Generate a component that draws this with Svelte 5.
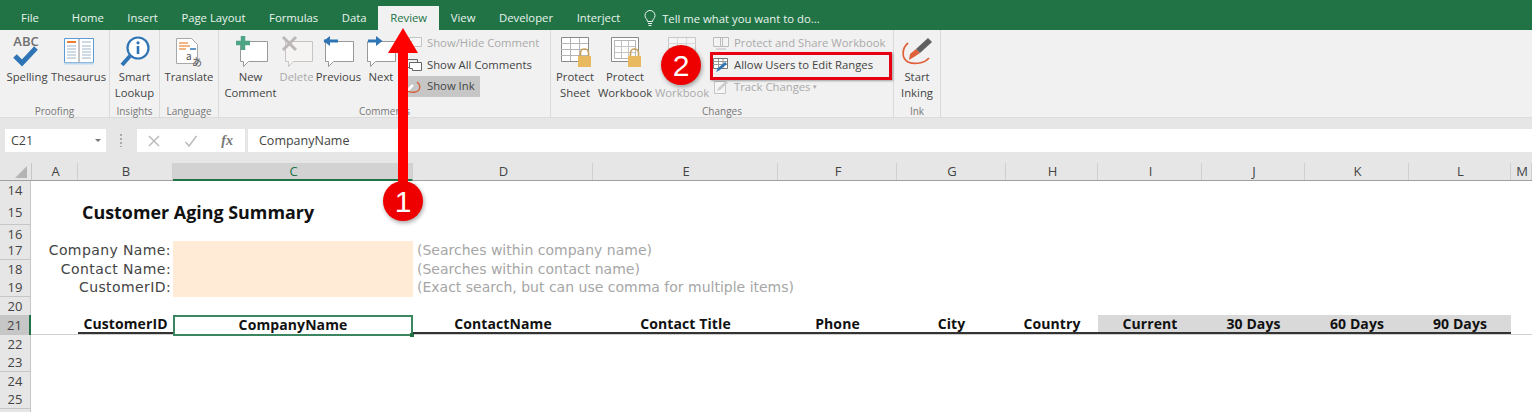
<script>
  const tabs = ['Home', 'Insert', 'Page Layout', 'Formulas', 'Data', 'Review', 'View', 'Developer', 'Interject'];
  const columns = [
    { l: 'A', w: 46 }, { l: 'B', w: 95 }, { l: 'C', w: 240, on: true }, { l: 'D', w: 180 }, { l: 'E', w: 185 },
    { l: 'F', w: 119 }, { l: 'G', w: 109 }, { l: 'H', w: 92 }, { l: 'I', w: 104 }, { l: 'J', w: 103 },
    { l: 'K', w: 104 }, { l: 'L', w: 102 }, { l: 'M', w: 21 }
  ];
  const rows = [
    { n: 14, h: 18 }, { n: 15, h: 26 }, { n: 16, h: 16 }, { n: 17, h: 19 }, { n: 18, h: 18 }, { n: 19, h: 19 },
    { n: 20, h: 18 }, { n: 21, h: 20 }, { n: 22, h: 18 }, { n: 23, h: 19 }, { n: 24, h: 18 }, { n: 25, h: 19 }, { n: '', h: 18 }
  ];
  const filters = [
    { n: 17, label: 'Company Name:', hint: '(Searches within company name)' },
    { n: 18, label: 'Contact Name:', hint: '(Searches within contact name)' },
    { n: 19, label: 'CustomerID:', hint: '(Exact search, but can use comma for multiple items)' }
  ];
  const heads = ['CustomerID', 'CompanyName', 'ContactName', 'Contact Title', 'Phone', 'City', 'Country', 'Current', '30 Days', '60 Days', '90 Days'];
</script>

<div class="app">
  <div class="tabbar">
    <div class="file">File</div>
    {#each tabs as tab}
      <div class="tab" class:active={tab === 'Review'}>{tab}</div>
    {/each}
    <div class="tell">
      <svg width="12" height="17" viewBox="0 0 12 17" fill="none" stroke="#e8f3ec" stroke-width="1"><path d="M3.500 11.500C3.500 9 1 8.500 1 5.500a5 5 0 0 1 10 0c0 3-2.500 3.500-2.500 6zM4 13.500h4M4.500 15.500h3" /></svg>
      <span>Tell me what you want to do...</span>
    </div>
  </div>

  <div class="ribbon">
    <section class="group" style="width:110px">
      <div class="tools">
        <div class="big" style="width:48px;margin-left:3px">
          <svg class="ico" width="32" height="34" viewBox="0 0 32 34">
            <text x="15" y="11" text-anchor="middle" class="abc">ABC</text>
            <path d="M4 21l7 7L25 13" fill="none" stroke="#2f75b5" stroke-width="5" />
          </svg>
          <span>Spelling</span>
        </div>
        <div class="big" style="width:55px">
          <svg class="ico" width="32" height="34" viewBox="0 0 32 34">
            <path d="M1.500 3.500h29v24h-29z" fill="#fff" stroke="#5b9bd5" />
            <path d="M16 3.500v24" stroke="#8a8a8a" />
            <path d="M1.500 27.500h29v2h-29z" fill="#bcd6ee" />
            <path d="M4 7h9" stroke="#ed7d31" stroke-width="2" />
            <path d="M4 11h9M4 14h9M4 17h9M4 20h9M4 23h9M19 7h9M19 11h9M19 14h9M19 17h9M19 20h9M19 23h9" stroke="#9db4c9" />
          </svg>
          <span>Thesaurus</span>
        </div>
      </div>
      <div class="glabel">Proofing</div>
    </section>

    <section class="group" style="width:50px">
      <div class="tools">
        <div class="big" style="width:49px">
          <svg class="ico" width="32" height="34" viewBox="0 0 32 34">
            <circle cx="19" cy="13" r="10.500" fill="#fff" stroke="#2f75b5" stroke-width="2.200" />
            <path d="M11 21L3 30" stroke="#2f75b5" stroke-width="4" />
            <circle cx="19" cy="7.800" r="1.600" fill="#2f75b5" />
            <path d="M19 11v8" stroke="#2f75b5" stroke-width="2.600" />
          </svg>
          <span>Smart<br />Lookup</span>
        </div>
      </div>
      <div class="glabel">Insights</div>
    </section>

    <section class="group" style="width:59px">
      <div class="tools">
        <div class="big" style="width:58px">
          <svg class="ico" width="32" height="34" viewBox="0 0 32 34">
            <path d="M3.500 3.500h15l6 6v19h-21z" fill="#fff" stroke="#a8a8a8" />
            <path d="M6 8h9M6 11h11M6 14h7" stroke="#f0a060" stroke-width="1.500" />
            <text x="13" y="25" class="tr">a</text>
            <text x="19" y="31" class="tr">あ</text>
            <path d="M17 14h6" stroke="#2f75b5" stroke-width="1.500" />
          </svg>
          <span>Translate</span>
        </div>
      </div>
      <div class="glabel">Language</div>
    </section>

    <section class="group" style="width:332px">
      <div class="tools">
        <div class="big" style="width:57px;margin-left:3px">
          <svg class="ico" width="34" height="34" viewBox="0 0 34 34">
            <path d="M6.500 6.500h27v20h-19l-5 5v-5h-3z" fill="#fff" stroke="#999" stroke-linejoin="round" />
            <path d="M9 1v14M2 8h14" stroke="#4ea585" stroke-width="4.500" />
          </svg>
          <span>New<br />Comment</span>
        </div>
        <div class="big off" style="width:35px">
          <svg class="ico" width="34" height="34" viewBox="0 0 34 34">
            <path d="M5.500 6.500h27v20h-19l-5 5v-5h-3z" fill="#f6f3f3" stroke="#c9c4c4" stroke-linejoin="round" />
            <path d="M3 2l13 13M16 2L3 15" stroke="#bdb8b8" stroke-width="3" />
          </svg>
          <span>Delete</span>
        </div>
        <div class="big" style="width:49px">
          <svg class="ico" width="34" height="34" viewBox="0 0 34 34">
            <path d="M3.500 6.500h28v20h-20l-5 5v-5h-3z" fill="#fff" stroke="#999" stroke-linejoin="round" />
            <path d="M2 6h14" stroke="#2f75b5" stroke-width="3" /><path d="M8 1L1.500 6 8 11z" fill="#2f75b5" />
          </svg>
          <span>Previous</span>
        </div>
        <div class="big" style="width:36px">
          <svg class="ico" width="34" height="34" viewBox="0 0 34 34">
            <path d="M3.500 6.500h28v20h-20l-5 5v-5h-3z" fill="#fff" stroke="#999" stroke-linejoin="round" />
            <path d="M4 6h10" stroke="#2f75b5" stroke-width="3" /><path d="M12 1l6.500 5L12 11z" fill="#2f75b5" />
          </svg>
          <span>Next</span>
        </div>
        <div class="smalls" style="margin-left:6px">
          <div class="small off">
            <svg width="18" height="18" viewBox="0 0 18 18"><path d="M4.500 3.500h12v9h-8l-3 3v-3h-1z" fill="#f6f6f6" stroke="#c4c4c4" /><path d="M1.500 6.500l3 3 3-3" fill="none" stroke="#c4c4c4" /></svg>
            <span>Show/Hide Comment</span>
          </div>
          <div class="small">
            <svg width="18" height="18" viewBox="0 0 18 18"><path d="M1.500 3.500h11v8h-11z" fill="#f1f1f1" stroke="#666" /><path d="M4.500 6.500h12v8h-9v-2h-3z" fill="#fff" stroke="#666" /></svg>
            <span>Show All Comments</span>
          </div>
          <div class="small pressed">
            <svg width="18" height="18" viewBox="0 0 18 18"><path d="M1.500 13.500L8 7" stroke="#fff" stroke-width="2.500" /><path d="M12 4c4 3 4 9-2 10-3 .5-6 0-8-1" fill="none" stroke="#d9603a" stroke-width="1.300" /></svg>
            <span>Show Ink</span>
          </div>
        </div>
      </div>
      <div class="glabel">Comments</div>
    </section>

    <section class="group" style="width:343px">
      <div class="tools">
        <div class="big" style="width:46px;margin-left:1px">
          <svg class="ico" width="34" height="34" viewBox="0 0 34 34">
            <path d="M3.500 2.500h27v24h-27z" fill="#fff" stroke="#8a8a8a" />
            <path d="M3 8.500h27M3 14.500h27M3 20.500h27M12.500 3v23M21.500 3v23" stroke="#b5b5b5" />
            <path d="M22.500 21v-3a4 4 0 0 1 8 0v3" fill="none" stroke="#c9a15a" stroke-width="1.600" />
            <path d="M20 21h13v11H20z" fill="#e8b95e" />
          </svg>
          <span>Protect<br />Sheet</span>
        </div>
        <div class="big" style="width:54px">
          <svg class="ico" width="34" height="34" viewBox="0 0 34 34">
            <path d="M3.500 2.500h27v24h-27z" fill="#fff" stroke="#8a8a8a" />
            <path d="M6.500 5.500h21v18h-21z" fill="#fff" stroke="#b5b5b5" />
            <path d="M6 11.500h21M6 17.500h21M13.500 6v17M20.500 6v17" stroke="#c4c4c4" />
            <path d="M22.500 21v-3a4 4 0 0 1 8 0v3" fill="none" stroke="#c9a15a" stroke-width="1.600" />
            <path d="M20 21h13v11H20z" fill="#e8b95e" />
          </svg>
          <span>Protect<br />Workbook</span>
        </div>
        <div class="big off" style="width:60px">
          <svg class="ico" width="34" height="34" viewBox="0 0 34 34">
            <path d="M3.500 2.500h27v24h-27z" fill="#f5f5f5" stroke="#c8c8c8" />
            <path d="M3 8.500h27M3 14.500h27M12.500 3v23M21.500 3v23" stroke="#d8d8d8" />
          </svg>
          <span>&nbsp;<br />Workbook</span>
        </div>
        <div class="smalls">
          <div class="small off">
            <svg width="18" height="18" viewBox="0 0 18 18"><path d="M1.500 3.500h9v9h-9zM8.500 3.500h8v9h-8z" fill="#f4f4f4" stroke="#bcbcbc" /><path d="M4 15h10" stroke="#bcbcbc" /></svg>
            <span>Protect and Share Workbook</span>
          </div>
          <div class="small">
            <svg width="18" height="18" viewBox="0 0 18 18"><path d="M1.500 2.500h14v10h-14z" fill="#fff" stroke="#777" /><path d="M1 5.500h14M1 8.500h14M6.500 3v9M11 3v9" stroke="#9a9a9a" /><path d="M4 16l2-4 7-6 2 2-7 6z" fill="#2f75b5" /></svg>
            <span>Allow Users to Edit Ranges</span>
          </div>
          <div class="small off">
            <svg width="18" height="18" viewBox="0 0 18 18"><path d="M2.500 3.500h11v12h-11z" fill="#f6f6f6" stroke="#c4c4c4" /><path d="M5 13l1-3 8-7 2 2-8 7z" fill="#cfcfcf" /></svg>
            <span>Track Changes <i>▾</i></span>
          </div>
        </div>
      </div>
      <div class="glabel">Changes</div>
    </section>

    <section class="group" style="width:47px">
      <div class="tools">
        <div class="big" style="width:46px">
          <svg class="ico" width="34" height="34" viewBox="0 0 34 34">
            <path d="M8 8C2 13 1 23 8 27c7 3 17 1 21-4" fill="none" stroke="#e0603a" stroke-width="1.700" />
            <path d="M14 22l-5 3 1-6 6-5 4 4z" fill="#e0603a" />
            <path d="M16 14L28 3l4 4-12 11z" fill="#5f5f5f" />
          </svg>
          <span>Start<br />Inking</span>
        </div>
      </div>
      <div class="glabel">Ink</div>
    </section>
  </div>

  <div class="formula">
    <div class="namebox"><span>C21</span><i></i></div>
    <div class="grip"></div>
    <div class="fbtns">
      <svg width="14" height="14" viewBox="0 0 14 14"><path d="M2 2l10 10M12 2L2 12" stroke="#bcbcbc" stroke-width="1.500" fill="none" /></svg>
      <svg width="14" height="14" viewBox="0 0 14 14"><path d="M1.500 8l3.500 4 7.500-10" stroke="#bcbcbc" stroke-width="1.500" fill="none" /></svg>
      <span class="fx">fx</span>
    </div>
    <div class="finput">CompanyName</div>
  </div>

  <div class="colhead">
    <div class="corner"><svg width="12" height="14" viewBox="0 0 12 14"><path d="M12 1v12H0z" fill="#b4b4b4" /></svg></div>
    {#each columns as col}
      <div class="colcell" class:on={col.on} style="width:{col.w}px">{col.l}</div>
    {/each}
  </div>

  <div class="sheet">
    {#each rows as row}
      <div class="row" class:current={row.n === 21} style="height:{row.h}px">
        <div class="rowno" class:on={row.n === 21}>{row.n}</div>
        {#if row.n === 15}
          <div class="title">Customer Aging Summary</div>
        {:else if filters.some((f) => f.n === row.n)}
          {@const f = filters.find((f) => f.n === row.n)}
          <div class="flabel">{f.label}</div>
          <div class="finputcell"></div>
          <div class="fhint">{f.hint}</div>
        {:else if row.n === 21}
          <div class="headspacer"></div>
          {#each heads as head, i}
            <div class="head" class:sel={i === 1} class:shade={i >= 7}>
              {head}
              {#if i === 1}<b class="handle"></b>{/if}
            </div>
          {/each}
        {/if}
      </div>
    {/each}
  </div>

  <div class="redbox"></div>
  <svg class="marks" width="1532" height="412" viewBox="0 0 1532 412">
    <path d="M403 28l15 25h-10v130h-10V53h-10z" fill="#fe0000" />
    <circle cx="403" cy="201" r="20" fill="#ee0000" />
    <text x="403" y="212" text-anchor="middle">1</text>
    <circle cx="681" cy="65" r="20" fill="#ee0000" />
    <text x="681" y="76" text-anchor="middle">2</text>
  </svg>
</div>

<style>
  :global(body) {
    overflow: hidden;
    background: #fff;
  }

  .app {
    position: relative;
    width: 1532px;
    height: 412px;
    overflow: hidden;
    font-family: "Open Sans", "Liberation Sans", sans-serif;
    color: #444;
  }

  .tabbar {
    display: flex;
    align-items: flex-end;
    height: 30px;
    background: #217346;
    color: #e9f3ed;
    font-size: 11.300px;
  }

  .file {
    width: 60px;
    height: 24px;
    line-height: 24px;
    text-align: center;
  }

  .tab {
    height: 24px;
    line-height: 23px;
    padding: 0 11.800px;
    white-space: nowrap;
  }

  .tab.active {
    background: #f1f1f1;
    color: #217346;
  }

  .tell {
    display: flex;
    align-items: center;
    gap: 6px;
    height: 24px;
    margin-left: 12px;
  }

  .ribbon {
    display: flex;
    height: 88px;
    background: #f1f1f1;
    border-bottom: 1px solid #dcdcdc;
    box-sizing: border-box;
  }

  .group {
    display: flex;
    flex-direction: column;
    box-sizing: border-box;
    border-right: 1px solid #dadada;
    font-size: 11.300px;
  }

  .tools {
    display: flex;
    flex: 1;
    min-height: 0;
  }

  .big {
    display: flex;
    flex-direction: column;
    align-items: center;
    text-align: center;
    line-height: 16px;
    padding-top: 5px;
    white-space: nowrap;
    flex-shrink: 0;
  }

  .ico {
    height: 34px;
    overflow: visible;
  }

  .off {
    color: #aaa;
  }

  .glabel {
    height: 14px;
    line-height: 16px;
    text-align: center;
    font-size: 10px;
    color: #777;
  }

  .smalls {
    display: flex;
    flex-direction: column;
    padding-top: 2px;
  }

  .small {
    display: flex;
    align-items: center;
    gap: 4px;
    height: 22px;
    padding-right: 2px;
    white-space: nowrap;
    width: max-content;
  }

  .small span {
    margin-top: -2px;
  }

  .small i {
    font-style: normal;
    font-size: 7px;
    vertical-align: 2px;
  }

  .pressed {
    background: #c6c6c6;
    height: 21px;
    padding-right: 5px;
  }

  .formula {
    display: flex;
    align-items: center;
    height: 45px;
    padding-left: 5px;
    box-sizing: border-box;
    background: #e6e6e6;
  }

  .namebox {
    display: flex;
    align-items: center;
    justify-content: space-between;
    width: 101px;
    height: 23px;
    padding: 0 5px 0 6px;
    box-sizing: border-box;
    background: #fff;
    font-size: 12.500px;
  }

  .namebox i {
    border: 3px solid transparent;
    border-top: 3px solid #777;
    margin-top: 3px;
  }

  .grip {
    width: 2px;
    height: 13px;
    margin: 0 15px 0 14px;
    background: repeating-linear-gradient(#aaa 0 2px, transparent 2px 4px);
  }

  .fbtns {
    display: flex;
    align-items: center;
    justify-content: space-between;
    width: 108px;
    height: 23px;
    padding: 0 12px 0 10px;
    box-sizing: border-box;
    background: #fff;
  }

  .fx {
    font-family: "Liberation Serif", serif;
    font-style: italic;
    font-weight: bold;
    font-size: 14px;
    color: #777;
  }

  .finput {
    flex: 1;
    height: 23px;
    line-height: 23px;
    margin-left: 3px;
    padding-left: 11px;
    background: #fff;
    font-size: 12.500px;
  }

  .colhead {
    display: flex;
    height: 18px;
    background: #e6e6e6;
    border-bottom: 1px solid #a0a0a0;
    box-sizing: border-box;
    font-size: 13px;
  }

  .corner {
    display: flex;
    align-items: flex-end;
    justify-content: flex-end;
    width: 32px;
    flex-shrink: 0;
    padding: 0 4px 1px 0;
    box-sizing: border-box;
    border-right: 1px solid #c6c6c6;
  }

  .colcell {
    flex-shrink: 0;
    text-align: center;
    line-height: 17px;
    padding-left: 2px;
    box-sizing: border-box;
    border-right: 1px solid #cfcfcf;
  }

  .colcell.on {
    background: #d2d2d2;
    color: #217346;
    border-bottom: 2px solid #217346;
    height: 18px;
  }

  .row {
    display: grid;
    grid-template-columns: 32px 46px 95px 240px 180px 185px 119px 109px 92px 104px 103px 104px 102px 1fr;
  }

  .row.current {
    box-shadow: inset 0 -1px 0 #cfcfcf;
  }

  .rowno {
    grid-column: 1;
    width: 31px;
    box-sizing: border-box;
    background: #e6e6e6;
    border-bottom: 1px solid #c6c6c6;
    border-right: 1px solid #c6c6c6;
    font-size: 13px;
    display: flex;
    align-items: center;
    justify-content: center;
  }

  .rowno.on {
    background: #c6c6c6;
    border-right: 2px solid #217346;
  }

  .title {
    grid-column: 3;
    padding: 0 0 0 4px;
    align-self: center;
    white-space: nowrap;
    font-family: "Open Sans", sans-serif;
    font-weight: 700;
    font-size: 17.900px;
    color: #111;
  }

  .flabel {
    grid-column: 2 / span 2;
    text-align: right;
    padding-right: 2px;
    font-family: "DejaVu Sans", sans-serif;
    font-size: 14px;
    letter-spacing: 0.400px;
    line-height: 19px;
    white-space: nowrap;
    color: #444;
  }

  .finputcell {
    background: #ffebd6;
  }

  .fhint {
    white-space: nowrap;
    padding-left: 4px;
    font-family: "DejaVu Sans", sans-serif;
    font-size: 14px;
    line-height: 19px;
    color: #a6a6a6;
  }

  .headspacer {
    grid-column: 2;
  }

  .head {
    position: relative;
    box-sizing: border-box;
    height: 19px;
    text-align: center;
    line-height: 18px;
    border-bottom: 2px solid #333;
    font-family: "Open Sans", sans-serif;
    font-weight: 700;
    font-size: 14px;
    letter-spacing: 0.100px;
    white-space: nowrap;
    color: #111;
  }

  .head.shade {
    background: #d9d9d9;
  }

  .head.sel {
    height: 21px;
    border: 2px solid #3b8560;
    line-height: 16px;
  }

  .handle {
    position: absolute;
    right: -3px;
    bottom: -3px;
    width: 4px;
    height: 4px;
    background: #217346;
  }

  .redbox {
    position: absolute;
    left: 710px;
    top: 52px;
    width: 182px;
    height: 28px;
    box-sizing: border-box;
    border: 3px solid #e60012;
    box-shadow: 1px 1px 2px rgba(0, 0, 0, 0.35);
  }

  .marks {
    position: absolute;
    left: 0;
    top: 0;
  }

  .marks circle {
    filter: drop-shadow(1px 2px 2px rgba(0, 0, 0, 0.35));
  }

  .marks text {
    font-family: "Liberation Sans", sans-serif;
    font-size: 30px;
    fill: #fff;
  }

  .abc {
    font-family: "Open Sans", sans-serif;
    font-size: 13px;
    font-weight: 600;
    fill: #6e6e6e;
  }

  .tr {
    font-family: "Noto Sans CJK JP", "Open Sans", sans-serif;
    font-size: 10px;
    fill: #555;
  }
</style>
